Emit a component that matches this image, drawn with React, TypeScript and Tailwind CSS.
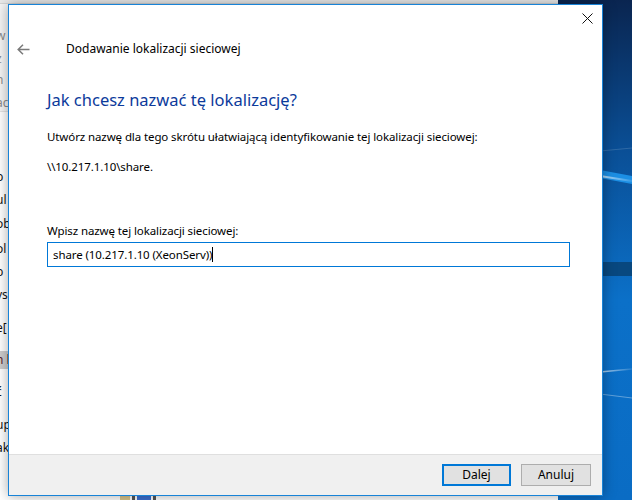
import React from 'react';

const font = { fontFamily: '"Noto Sans", "Liberation Sans", sans-serif' };

const BackWindowRows: { y: number; t: string; dim?: boolean; hl?: boolean }[] = [
  { y: 27, t: 'w', dim: true },
  { y: 50, t: 'z', dim: true },
  { y: 71, t: 'n', dim: true },
  { y: 94, t: 'ac', dim: true },
  { y: 168, t: 'b' },
  { y: 191, t: 'ul' },
  { y: 215, t: 'ob' },
  { y: 240, t: 'ol' },
  { y: 263, t: 'b' },
  { y: 286, t: 'ys' },
  { y: 319, t: 'e[' },
  { y: 351, t: 'n k', hl: true },
  { y: 383, t: 'ć' },
  { y: 416, t: 'up' },
  { y: 439, t: 'ak' },
];

const Wallpaper: React.FC = () => (
  <svg className="absolute inset-0" width="632" height="500" viewBox="0 0 632 500">
    <defs>
      <linearGradient id="wp" x1="0" y1="0" x2="0" y2="1">
        <stop offset="0" stopColor="#0a2550" />
        <stop offset="0.3" stopColor="#0a4f96" />
        <stop offset="0.6" stopColor="#0b70c8" />
        <stop offset="1" stopColor="#0a6cc4" />
      </linearGradient>
      <linearGradient id="streak" x1="0" y1="0" x2="1" y2="0">
        <stop offset="0" stopColor="#ffffff" stopOpacity="0.7" />
        <stop offset="1" stopColor="#ffffff" stopOpacity="0.1" />
      </linearGradient>
    </defs>
    <rect width="632" height="500" fill="url(#wp)" />
    <polygon points="600,170 632,176 632,184 600,178" fill="#1c8fe4" />
    <path d="M600 176 L632 181" stroke="url(#streak)" strokeWidth="2" />
    <path d="M600 151 L632 148" stroke="#ffffff" strokeOpacity="0.15" strokeWidth="1" />
    <rect x="600" y="262" width="32" height="14" fill="#08487f" />
    <path d="M600 372 L632 369" stroke="url(#streak)" strokeWidth="1.5" />
    <path d="M600 394 L632 398" stroke="#ffffff" strokeOpacity="0.35" strokeWidth="1" />
  </svg>
);

const App: React.FC = () => {
  return (
    <div className="relative w-[632px] h-[500px] overflow-hidden" style={font}>
      <Wallpaper />

      {/* window behind the dialog */}
      <div className="absolute left-0 top-0 w-[558px] h-[500px] bg-white">
        <div className="h-[4px] bg-[#e9e9e9] border-b border-[#d5d5d5]" />
        <div className="h-[108px] bg-[#f5f5f5] border-b border-[#e3e3e3]" />
        {BackWindowRows.map((r) => (
          <div
            key={r.y}
            className={`absolute left-[-4px] h-[18px] w-[16px] text-[12px] leading-[18px] whitespace-nowrap ${
              r.dim ? 'text-[#8a8a8a]' : r.hl ? 'text-[#5a1a2a] bg-[#cccccc]' : 'text-[#111]'
            }`}
            style={{ top: r.y }}
          >
            {r.t}
          </div>
        ))}
        <div className="absolute left-[120px] bottom-0 flex gap-[2px] h-[5px]">
          <div className="w-[10px] bg-[#d8c48a]" />
          <div className="w-[3px] bg-[#555]" />
          <div className="w-[14px] bg-[#3b6fd0]" />
          <div className="w-[3px] bg-[#555]" />
        </div>
      </div>

      {/* dialog */}
      <div className="absolute left-[8px] top-[4px] w-[595px] h-[492px] flex flex-col border border-[#1883d7] bg-white shadow-[0_0_12px_rgba(0,0,0,0.35)]">
        <div className="flex-1 flex flex-col">
          <div className="h-[30px] flex justify-end pr-[9px] pt-[8px]">
            <svg width="11" height="11" viewBox="0 0 11 11">
              <path d="M0.5 0.5 L10.5 10.5 M10.5 0.5 L0.5 10.5" stroke="#111" strokeWidth="1" />
            </svg>
          </div>

          <div className="h-[28px] flex items-center pl-[8px]">
            <svg width="13" height="11" viewBox="0 0 13 11">
              <path d="M6 0.8 L1.2 5.5 L6 10.2 M1.2 5.5 L12.5 5.5" stroke="#7a7a7a" strokeWidth="1.5" fill="none" />
            </svg>
            <div className="ml-[36px] text-[12px] leading-[16px] text-black">Dodawanie lokalizacji sieciowej</div>
          </div>

          <div className="pl-[38px] flex flex-col text-[11.5px] tracking-[-0.1px]">
            <div className="mt-[26px] text-[16.5px] tracking-normal leading-[22px] text-[#0c3a9b]">
              Jak chcesz nazwać tę lokalizację?
            </div>
            <div className="mt-[18px] leading-[16px] text-black">
              Utwórz nazwę dla tego skrótu ułatwiającą identyfikowanie tej lokalizacji sieciowej:
            </div>
            <div className="mt-[14px] leading-[16px] text-black">\\10.217.1.10\share.</div>
            <div className="mt-[48px] leading-[16px] text-black">Wpisz nazwę tej lokalizacji sieciowej:</div>
            <div className="mt-[3px] w-[523px] h-[25px] border border-[#0078d7] flex items-center pl-[5px] text-black">
              <span>share (10.217.1.10 (XeonServ))</span>
              <span className="w-px h-[15px] bg-black" />
            </div>
          </div>
        </div>

        <div className="h-[41px] border-t border-[#dfdfdf] bg-[#f0f0f0] flex items-center justify-end gap-[10px] pr-[11px]">
          <button className="w-[69px] h-[22px] border-2 border-[#0078d7] bg-[#e1e1e1] text-[12px] text-black leading-none">
            Dalej
          </button>
          <button className="w-[70px] h-[22px] border border-[#adadad] bg-[#e1e1e1] text-[12px] text-black leading-none">
            Anuluj
          </button>
        </div>
      </div>
    </div>
  );
};

export default App;
